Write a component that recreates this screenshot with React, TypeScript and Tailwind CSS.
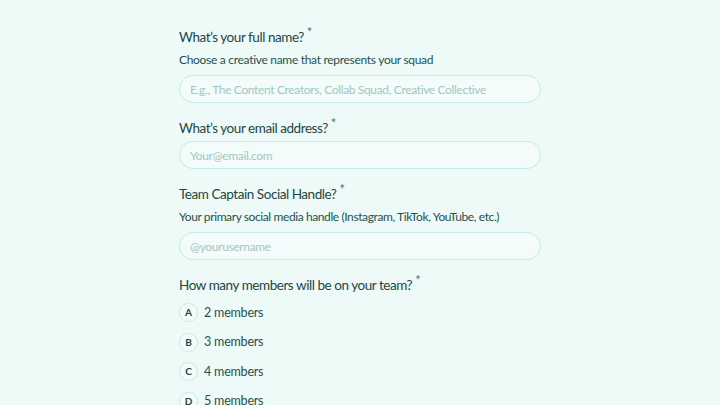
import React from "react";

const font = { fontFamily: "Lato, 'Noto Sans', sans-serif" };

function Label({ text }: { text: string }) {
  return (
    <div className="text-[13.5px] leading-[20px] text-[#1d4645] tracking-[-0.45px] whitespace-nowrap">
      {text}
      <sup className="ml-[3px] text-[13px] text-[#3f7d74] top-[-0.35em]">*</sup>
    </div>
  );
}

function TextInput({ placeholder }: { placeholder: string }) {
  return (
    <input
      type="text"
      placeholder={placeholder}
      style={font}
      className="w-full h-[28px] rounded-full border border-[#c6ebe2] bg-[#f3fcfa] px-[10px] text-[12px] tracking-[-0.35px] text-[#1d4645] placeholder:text-[#a3c7bf] outline-none"
    />
  );
}

const options = [
  { key: "A", label: "2 members" },
  { key: "B", label: "3 members" },
  { key: "C", label: "4 members" },
  { key: "D", label: "5 members" },
];

export default function App() {
  return (
    <div className="w-[720px] h-[405px] overflow-hidden bg-[#edfaf7]" style={font}>
      <div className="w-[362px] ml-[179px] pt-[27px] flex flex-col">
        {/* Full name */}
        <Label text="What’s your full name?" />
        <p className="mt-[4px] text-[12px] leading-[18px] tracking-[-0.3px] text-[#28504e] whitespace-nowrap">
          Choose a creative name that represents your squad
        </p>
        <div className="mt-[6px]">
          <TextInput placeholder="E.g., The Content Creators, Collab Squad, Creative Collective" />
        </div>

        {/* Email */}
        <div className="mt-[15px]">
          <Label text="What’s your email address?" />
        </div>
        <div className="mt-[3px]">
          <TextInput placeholder="Your@email.com" />
        </div>

        {/* Social handle */}
        <div className="mt-[15px]">
          <Label text="Team Captain Social Handle?" />
        </div>
        <p className="mt-[4px] text-[12px] leading-[18px] tracking-[-0.4px] text-[#28504e] whitespace-nowrap">
          Your primary social media handle (Instagram, TikTok, YouTube, etc.)
        </p>
        <div className="mt-[6px]">
          <TextInput placeholder="@yourusername" />
        </div>

        {/* Team size */}
        <div className="mt-[15px]">
          <Label text="How many members will be on your team?" />
        </div>
        <div className="mt-[8px] flex flex-col gap-[10.5px]">
          {options.map((o) => (
            <label key={o.key} className="flex items-center gap-[6px] cursor-pointer">
              <span className="w-[19px] h-[19px] rounded-full border border-[#c6ebe2] bg-[#f3fcfa] flex items-center justify-center text-[10px] font-bold text-[#1d4645]">
                {o.key}
              </span>
              <span className="text-[12.5px] leading-[18px] tracking-[-0.2px] text-[#28504e]">{o.label}</span>
            </label>
          ))}
        </div>
      </div>
    </div>
  );
}
